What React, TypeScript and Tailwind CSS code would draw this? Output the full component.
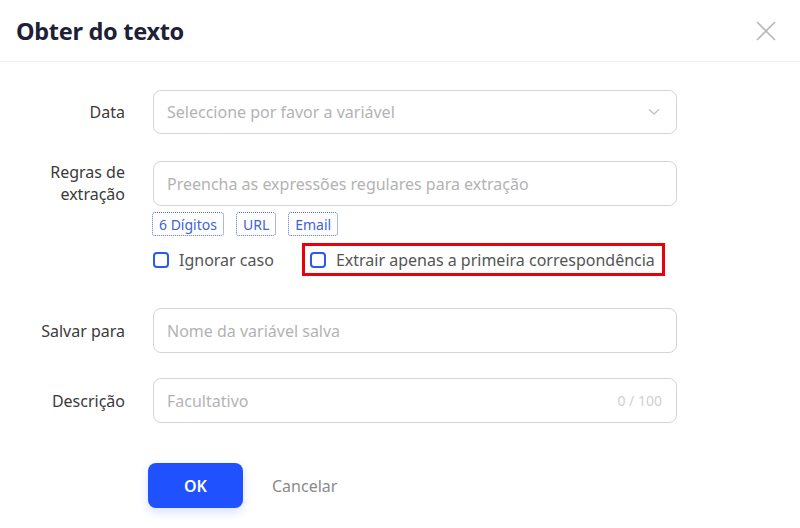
import React from "react";

const font = { fontFamily: '"Noto Sans", "Open Sans", sans-serif' };

function Label({ children }: { children: React.ReactNode }) {
  return (
    <div className="w-[125px] shrink-0 text-right text-[16px] leading-[22px] text-[#3a3a3a]">
      {children}
    </div>
  );
}

function Checkbox() {
  return <span className="inline-block w-[16px] h-[16px] rounded-[4px] border-2 border-[#2a58f0] bg-white" />;
}

export default function App() {
  return (
    <div className="w-[800px] h-[528px] bg-white relative overflow-hidden" style={font}>
      <div className="h-[62px] border-b border-[#efefef] flex items-center justify-between pl-[16px] pr-[24px]">
        <div className="text-[23.5px] font-bold text-[#1d2138] tracking-[-0.3px] mt-[2px]">Obter do texto</div>
        <svg width="20" height="20" viewBox="0 0 20 20" className="mt-[1px]">
          <path d="M1 1L19 19M19 1L1 19" stroke="#b8b8b8" strokeWidth="1.6" fill="none" />
        </svg>
      </div>

      <div className="flex flex-col">
        <div className="flex items-center mt-[28px]">
          <Label>Data</Label>
          <div className="ml-[28px] w-[524px] h-[44px] border border-[#d4d4d4] rounded-[8px] flex items-center justify-between pl-[13px] pr-[16px]">
            <span className="text-[16px] text-[#b3b3b3]">Seleccione por favor a variável</span>
            <svg width="12" height="8" viewBox="0 0 12 8">
              <path d="M1 1.5L6 6L11 1.5" stroke="#c4c4c4" strokeWidth="1.4" fill="none" />
            </svg>
          </div>
        </div>

        <div className="flex items-start mt-[27px]">
          <Label>
            <div>Regras de</div>
            <div>extração</div>
          </Label>
          <div className="ml-[28px] w-[524px] flex flex-col">
            <div className="h-[45px] border border-[#d4d4d4] rounded-[8px] flex items-center pl-[13px]">
              <span className="text-[16px] text-[#b3b3b3]">Preencha as expressões regulares para extração</span>
            </div>
            <div className="flex gap-[12px] mt-[6px] -ml-[1px]">
              <span className="h-[24px] px-[6px] flex items-center border border-dotted border-[#5470e6] rounded-[3px] text-[14px] text-[#3d5fe0]">6 Dígitos</span>
              <span className="h-[24px] px-[6px] flex items-center border border-dotted border-[#5470e6] rounded-[3px] text-[14px] text-[#3d5fe0]">URL</span>
              <span className="h-[24px] px-[6px] flex items-center border border-dotted border-[#5470e6] rounded-[3px] text-[14px] text-[#3d5fe0]">Email</span>
            </div>
            <div className="flex items-center mt-[7px]">
              <div className="flex items-center gap-[10px]">
                <Checkbox />
                <span className="text-[16px] text-[#555]">Ignorar caso</span>
              </div>
              <div className="ml-[28px] h-[33px] flex items-center gap-[10px] border-[3px] border-[#e8000b] pl-[5px] pr-[7px]">
                <Checkbox />
                <span className="text-[16px] text-[#555]">Extrair apenas a primeira correspondência</span>
              </div>
            </div>
          </div>
        </div>

        <div className="flex items-center mt-[32px]">
          <Label>Salvar para</Label>
          <div className="ml-[28px] w-[524px] h-[45px] border border-[#d4d4d4] rounded-[8px] flex items-center pl-[13px]">
            <span className="text-[16px] text-[#b3b3b3]">Nome da variável salva</span>
          </div>
        </div>

        <div className="flex items-center mt-[25px]">
          <Label>Descrição</Label>
          <div className="ml-[28px] w-[524px] h-[45px] border border-[#d4d4d4] rounded-[8px] flex items-center justify-between pl-[13px] pr-[14px]">
            <span className="text-[16px] text-[#b3b3b3]">Facultativo</span>
            <span className="text-[14px] text-[#d0d0d0]">0 / 100</span>
          </div>
        </div>

        <div className="flex items-center mt-[40px] pl-[148px]">
          <button className="w-[95px] h-[45px] rounded-[8px] bg-[#1f51ff] text-white text-[16px] font-semibold shadow-[0_4px_10px_rgba(31,81,255,0.18)]">
            OK
          </button>
          <span className="ml-[29px] text-[16px] text-[#8a8a8a]">Cancelar</span>
        </div>
      </div>
    </div>
  );
}
